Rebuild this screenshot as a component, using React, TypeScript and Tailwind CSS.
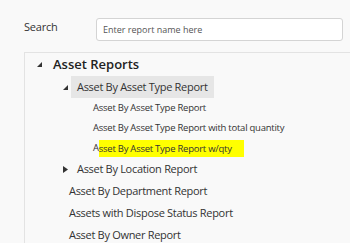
import React from "react";

const font = { fontFamily: '"Open Sans", "Noto Sans", Arial, sans-serif' };

function Expanded() {
  return (
    <svg width="5" height="5" viewBox="0 0 5 5" className="shrink-0">
      <polygon points="5,0 5,5 0,5" fill="#333" />
    </svg>
  );
}
function Collapsed() {
  return (
    <svg width="5" height="7" viewBox="0 0 5 7" className="shrink-0">
      <polygon points="0,0 5,3.5 0,7" fill="#333" />
    </svg>
  );
}

export default function App() {
  return (
    <div
      className="w-[350px] h-[243px] overflow-hidden bg-[#f9f9f9] text-[#333]"
      style={font}
    >
      <div className="flex items-center pt-[18px] pl-[24px]">
        <div className="w-[72px] text-[11px] tracking-[-0.2px] text-[#333] -mt-[4px]">Search</div>
        <div className="w-[247px] h-[23px] rounded-[3px] border border-[#d4d4d4] bg-white flex items-center pl-[6px]">
          <span className="text-[9px] text-[#555]">Enter report name here</span>
        </div>
      </div>
      <div className="mt-[11px] ml-[24px] border-t border-l border-[#e3e3e3] h-[200px]">
        <div className="flex items-center h-[23px] pl-[12px]">
          <Expanded />
          <span className="ml-[11px] text-[13px] font-semibold text-[#222]">Asset Reports</span>
        </div>
        <div className="flex items-center h-[22px] pl-[38px]">
          <Expanded />
          <div className="ml-[3px] h-[22px] w-[143px] bg-[#e6e6e6] flex items-center pl-[6px]">
            <span className="text-[11px] tracking-[-0.3px] text-[#333] whitespace-nowrap">Asset By Asset Type Report</span>
          </div>
        </div>
        <div className="pl-[68px] text-[9.5px] tracking-[-0.25px] text-[#333]">
          <div className="h-[20px] flex items-center">Asset By Asset Type Report</div>
          <div className="h-[20px] flex items-center">Asset By Asset Type Report with total quantity</div>
          <div className="h-[20px] flex items-center">
            A<span className="bg-[#ffff00] pr-[12px] leading-[17px]">sset By Asset Type Report w/qty</span>
          </div>
        </div>
        <div className="flex items-center h-[22px] pl-[38px]">
          <Collapsed />
          <span className="ml-[9px] text-[11px] tracking-[-0.3px] text-[#333]">Asset By Location Report</span>
        </div>
        <div className="pl-[44px] text-[11px] tracking-[-0.3px] text-[#333]">
          <div className="h-[22px] flex items-center">Asset By Department Report</div>
          <div className="h-[22px] flex items-center">Assets with Dispose Status Report</div>
          <div className="h-[22px] flex items-center">Asset By Owner Report</div>
        </div>
      </div>
    </div>
  );
}
